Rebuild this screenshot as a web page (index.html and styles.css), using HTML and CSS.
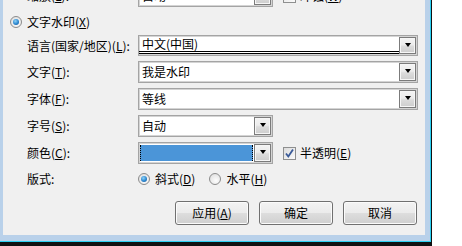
FILE: index.html
```html
<!DOCTYPE html>
<html lang="zh-CN">
<head>
<meta charset="utf-8">
<title>水印</title>
<link rel="stylesheet" href="styles.css">
</head>
<body>
<div class="window">
  <div class="frame">
    <div class="dialog">
      <div class="form form-top">
        <span class="label">缩放(<u>L</u>):</span>
        <div class="field-line">
          <div class="combo combo-sm">
            <span class="combo-text">自动</span>
            <span class="drop"><i class="arrow"></i></span>
          </div>
          <span class="check"><span class="box"></span>冲蚀(<u>W</u>)</span>
        </div>
      </div>

      <div class="radio-row">
        <span class="radio on"></span><span>文字水印(<u>X</u>)</span>
      </div>

      <div class="form">
        <span class="label">语言(国家/地区)(<u>L</u>):</span>
        <div class="combo combo-lang">
          <span class="lang-text">中文(中国)</span>
          <span class="drop"><i class="arrow"></i></span>
        </div>

        <span class="label">文字(<u>T</u>):</span>
        <div class="combo combo-wide">
          <span class="combo-text">我是水印</span>
          <span class="drop"><i class="arrow"></i></span>
        </div>

        <span class="label">字体(<u>F</u>):</span>
        <div class="combo combo-wide">
          <span class="combo-text">等线</span>
          <span class="drop"><i class="arrow"></i></span>
        </div>

        <span class="label">字号(<u>S</u>):</span>
        <div class="field-line">
          <div class="combo combo-sm">
            <span class="combo-text">自动</span>
            <span class="drop"><i class="arrow"></i></span>
          </div>
        </div>

        <span class="label">颜色(<u>C</u>):</span>
        <div class="field-line">
          <div class="combo combo-sm">
            <span class="combo-color"><span class="swatch"></span></span>
            <span class="drop"><i class="arrow"></i></span>
          </div>
          <span class="check"><span class="box checked"><svg width="11" height="11" viewBox="0 0 11 11"><path d="M2 5.5 L4.3 8.5 L9 1.5" fill="none" stroke="#3a5a98" stroke-width="1.8"/></svg></span>半透明(<u>E</u>)</span>
        </div>

        <span class="label">版式:</span>
        <div class="field-line layout-line">
          <span class="opt"><span class="radio on"></span>斜式(<u>D</u>)</span>
          <span class="opt"><span class="radio"></span>水平(<u>H</u>)</span>
        </div>
      </div>

      <div class="buttons">
        <button class="btn">应用(<u>A</u>)</button>
        <button class="btn">确定</button>
        <button class="btn">取消</button>
      </div>
    </div>
  </div>
</div>
</body>
</html>
```

FILE: styles.css
```css
html, body {
  margin: 0;
  padding: 0;
  background: #ffffff;
}

body {
  width: 462px;
  height: 246px;
  overflow: hidden;
  font-family: "Noto Sans CJK SC", "Noto Sans", sans-serif;
  font-size: 12px;
  color: #000;
}

u {
  text-decoration: underline;
  text-underline-offset: 1px;
  text-decoration-thickness: 1px;
}

.window {
  width: 432px;
  height: 246px;
  box-sizing: border-box;
  border-right: 1px solid #111;
  border-bottom: 4px solid #111;
}

.frame {
  height: 100%;
  box-sizing: border-box;
  border-right: 1px solid #2ad0f2;
  border-bottom: 1px solid #2ad0f2;
  background: #b9d1ea;
  padding: 0 5px 6px 3px;
}

.dialog {
  height: 100%;
  background: #f0f0f0;
  overflow: hidden;
}

/* form grid */
.form {
  display: grid;
  grid-template-columns: 111px auto;
  row-gap: 5px;
  padding-left: 24px;
  margin-top: 5px;
  align-items: center;
}

.form-top {
  margin-top: -15px;
}

.label {
  line-height: 16px;
  white-space: nowrap;
}

.field-line {
  display: flex;
  align-items: center;
}

.layout-line {
  height: 20px;
}

/* combos */
.combo {
  display: flex;
  height: 22px;
  box-sizing: border-box;
  border: 1px solid #a4a4a4;
  box-shadow: inset 0 0 0 1px #d4d4d4;
  background: #fff;
}

.combo-wide, .combo-lang {
  width: 280px;
}

.combo-lang {
  height: 21px;
}

.combo-sm {
  width: 135px;
}

.combo-text {
  flex: 1;
  padding-left: 3px;
  line-height: 20px;
  white-space: nowrap;
}

.lang-text {
  flex: 1;
  height: 15px;
  line-height: 15px;
  padding-left: 3px;
  border-bottom: 3px double #000;
  white-space: nowrap;
}

.combo-color {
  flex: 1;
  display: flex;
  padding: 2px 1px;
}

.swatch {
  flex: 1;
  border-left: 1px dotted #000;
  border-right: 1px dotted #000;
  background: #4b95d8;
}

.drop {
  width: 17px;
  box-sizing: border-box;
  margin: 1px 1px 1px 0;
  border: 1px solid #7b7b7b;
  box-shadow: inset 0 0 0 1px #f6f6f6;
  background: linear-gradient(#f4f4f4 0%, #ececec 45%, #dcdcdc 55%, #cdcdcd 100%);
  display: flex;
  align-items: center;
  justify-content: center;
}

.arrow {
  width: 0;
  height: 0;
  border-left: 3.5px solid transparent;
  border-right: 3.5px solid transparent;
  border-top: 4px solid #000;
  margin-top: -2px;
}

/* checkbox */
.check {
  display: flex;
  align-items: center;
  margin-left: 10px;
  line-height: 16px;
}

.box {
  width: 13px;
  height: 13px;
  box-sizing: border-box;
  border: 1px solid #8e8f8f;
  background: linear-gradient(135deg, #e2e2e2, #fbfbfb);
  margin-right: 4px;
  display: flex;
  align-items: center;
  justify-content: center;
}

.box.checked {
  background: linear-gradient(135deg, #dcdcdc, #fafafa);
}

/* radios */
.radio-row {
  display: flex;
  align-items: center;
  height: 16px;
  margin: 7px 0 0 7px;
  line-height: 16px;
}

.radio {
  width: 12px;
  height: 12px;
  box-sizing: border-box;
  border-radius: 50%;
  border: 1px solid #8b8b8b;
  background: radial-gradient(circle at 60% 65%, #fdfdfd, #dadada);
  display: flex;
  align-items: center;
  justify-content: center;
  margin-right: 5px;
  flex: none;
}

.radio.on::after {
  content: "";
  width: 6px;
  height: 6px;
  border-radius: 50%;
  background: radial-gradient(circle at 40% 35%, #8fd3f7 0%, #2a86cf 55%, #174f8e 100%);
}

.opt {
  display: flex;
  align-items: center;
  line-height: 16px;
  margin-right: 14px;
}

/* buttons */
.buttons {
  display: flex;
  justify-content: flex-end;
  gap: 10px;
  margin-top: 12px;
  padding-right: 8px;
}

.btn {
  width: 74px;
  height: 24px;
  box-sizing: border-box;
  border: 1px solid #707070;
  border-radius: 3px;
  box-shadow: inset 0 0 0 1px #fbfbfb;
  background: linear-gradient(#f3f3f3 0%, #ebebeb 48%, #dddddd 52%, #cfcfcf 100%);
  font-family: "Noto Sans CJK SC", "Noto Sans", sans-serif;
  font-size: 12px;
  color: #000;
  padding: 0;
  line-height: 20px;
}
```
